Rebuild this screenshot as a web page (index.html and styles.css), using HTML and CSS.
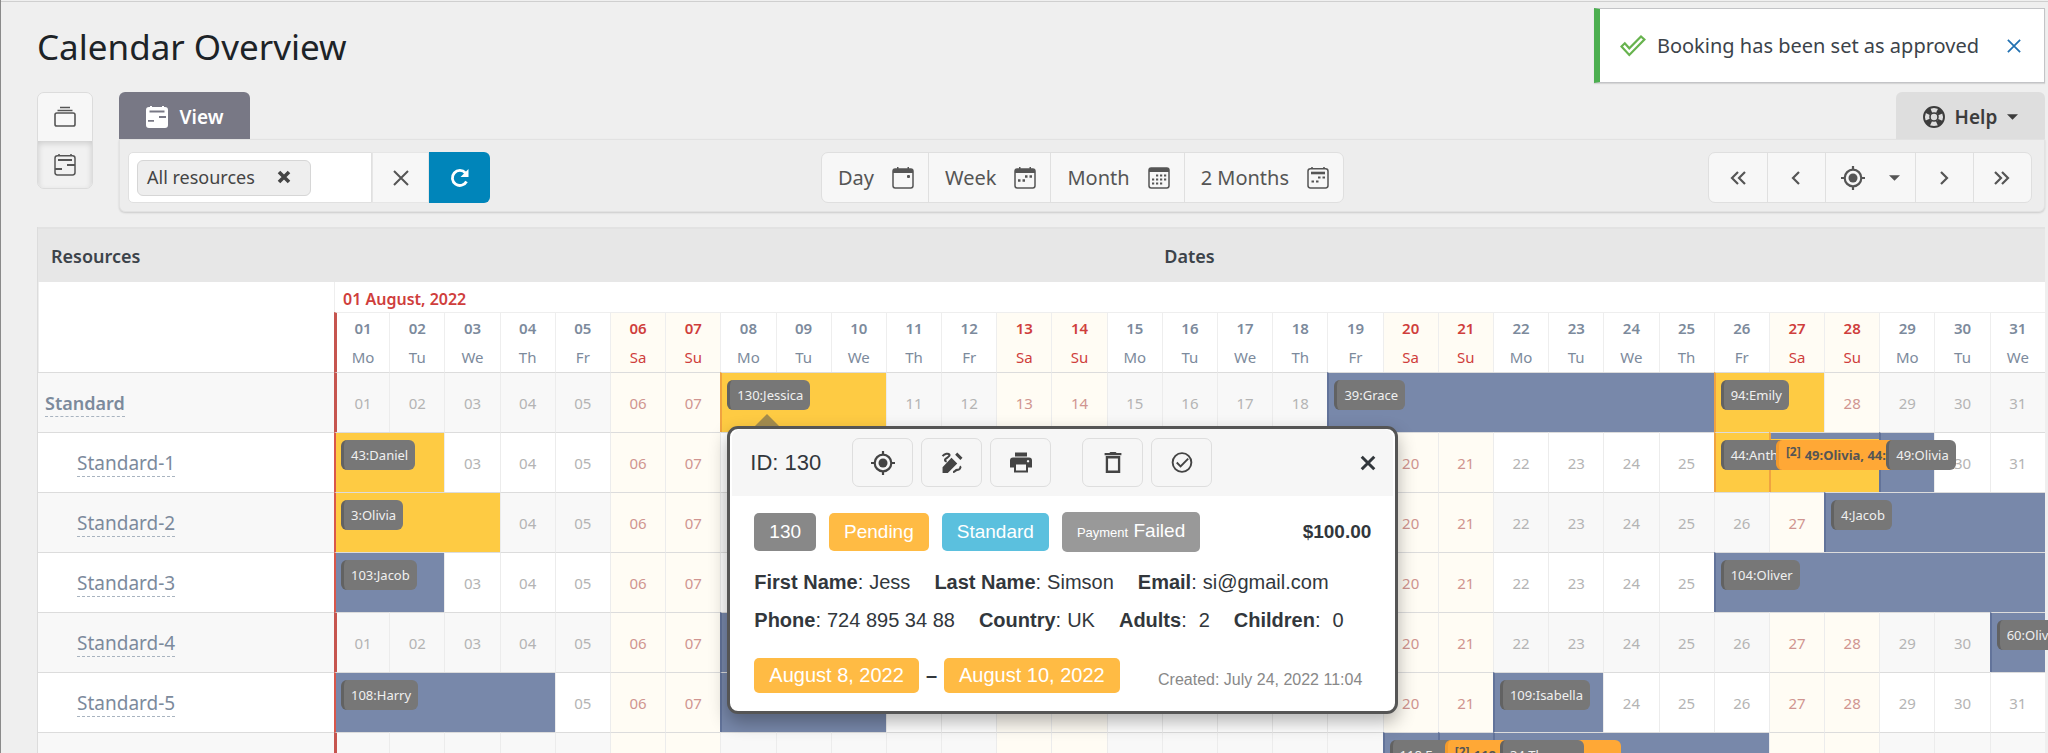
FILE: index.html
```
<!DOCTYPE html>
<html lang="en">
<head>
    <meta charset="UTF-8">
    <meta name="viewport" content="width=device-width, initial-scale=1.0">
    <title>Calendar Overview</title>
    <link rel="stylesheet" href="styles.css">
</head>
<body>
    <svg class="sprite" aria-hidden="true">
        <symbol id="i-stack" viewBox="0 0 22 22">
            <path d="M6 1.5h10M3.5 4.5h15" fill="none" stroke="currentColor" stroke-width="1.6"/>
            <rect x="1" y="7" width="20" height="13" rx="1.8" fill="none" stroke="currentColor" stroke-width="1.6"/>
        </symbol>
        <symbol id="i-timeline" viewBox="0 0 22 22">
            <path d="M5 0v2M17 0v2" stroke="currentColor" stroke-width="1.6"/>
            <rect x="1" y="1.8" width="20" height="19.2" rx="2.4" fill="none" stroke="currentColor" stroke-width="1.5"/>
            <path d="M4 6h14M13 11h8M1 15h7" stroke="currentColor" stroke-width="2.2"/>
        </symbol>
        <symbol id="i-timeline-fill" viewBox="0 0 22 22">
            <path fill="currentColor" fill-rule="evenodd" d="M3 1h1V0h2v1h10V0h2v1h1a3 3 0 0 1 3 3v15a3 3 0 0 1-3 3H3a3 3 0 0 1-3-3V4a3 3 0 0 1 3-3zM3.5 4.600v1.800h15V4.600zM13 10v2h7v-2zM2 14v1.800h6V14z"/>
        </symbol>
        <symbol id="i-day" viewBox="0 0 22 22">
            <path d="M1 6V4a2 2 0 0 1 2-2h2V0h1.5v2h9V0H17v2h2a2 2 0 0 1 2 2v2z" fill="currentColor"/>
            <rect x="1" y="2" width="20" height="19" rx="2.2" fill="none" stroke="currentColor" stroke-width="1.5"/>
            <rect x="15" y="8" width="3" height="3" rx="1" fill="currentColor"/>
        </symbol>
        <symbol id="i-week" viewBox="0 0 22 22">
            <path d="M1 6V4a2 2 0 0 1 2-2h2V0h1.5v2h9V0H17v2h2a2 2 0 0 1 2 2v2z" fill="currentColor"/>
            <rect x="1" y="2" width="20" height="19" rx="2.2" fill="none" stroke="currentColor" stroke-width="1.5"/>
            <path d="M11 9.5h2.5M15.500 9.500H18M4 13.500h2.500M8.500 13.500H11" stroke="currentColor" stroke-width="2.4"/>
        </symbol>
        <symbol id="i-month" viewBox="0 0 22 22">
            <path d="M1 5V3a2 2 0 0 1 2-2h16a2 2 0 0 1 2 2v2z" fill="currentColor"/>
            <rect x="1" y="1" width="20" height="20" rx="2.2" fill="none" stroke="currentColor" stroke-width="1.5"/>
            <path d="M8 8.500h11M4 12.500h15M4 16.500h11" stroke="currentColor" stroke-width="2.2" stroke-dasharray="2.2 1.8"/>
        </symbol>
        <symbol id="i-months" viewBox="0 0 22 22">
            <path d="M5 0v2M17 0v2" stroke="currentColor" stroke-width="1.6"/>
            <rect x="1" y="1.8" width="20" height="19.2" rx="2.4" fill="none" stroke="currentColor" stroke-width="1.5"/>
            <path d="M4 6h14" stroke="currentColor" stroke-width="2.6"/>
            <path d="M11 10.500h2.500M15.500 10.500H18M4.500 14.500H7M9 14.500h2.500" stroke="currentColor" stroke-width="2.2"/>
        </symbol>
        <symbol id="i-x" viewBox="0 0 16 16">
            <path d="M1 1l14 14M15 1L1 15" fill="none" stroke="currentColor" stroke-width="2"/>
        </symbol>
        <symbol id="i-x-bold" viewBox="0 0 14 14">
            <path d="M2 2l10 10M12 2L2 12" fill="none" stroke="currentColor" stroke-width="3.6"/>
        </symbol>
        <symbol id="i-x-medium" viewBox="0 0 14 14">
            <path d="M1.500 1.500l11 11M12.500 1.500l-11 11" fill="none" stroke="currentColor" stroke-width="2.6"/>
        </symbol>
        <symbol id="i-refresh" viewBox="0 0 20 20">
            <path d="M16.500 13.500A7.500 7.500 0 1 1 15.500 5" fill="none" stroke="currentColor" stroke-width="2.8"/>
            <path d="M18.500 1v8h-8z" fill="currentColor"/>
        </symbol>
        <symbol id="i-left" viewBox="0 0 16 16">
            <path d="M11 2L5 8l6 6" fill="none" stroke="currentColor" stroke-width="2.2"/>
        </symbol>
        <symbol id="i-right" viewBox="0 0 16 16">
            <path d="M5 2l6 6-6 6" fill="none" stroke="currentColor" stroke-width="2.2"/>
        </symbol>
        <symbol id="i-first" viewBox="0 0 16 16">
            <path d="M8 2L2 8l6 6M15 2L9 8l6 6" fill="none" stroke="currentColor" stroke-width="2.2"/>
        </symbol>
        <symbol id="i-last" viewBox="0 0 16 16">
            <path d="M1 2l6 6-6 6M8 2l6 6-6 6" fill="none" stroke="currentColor" stroke-width="2.2"/>
        </symbol>
        <symbol id="i-target" viewBox="0 0 24 24">
            <circle cx="12" cy="12" r="8.3" fill="none" stroke="currentColor" stroke-width="2.2"/>
            <circle cx="12" cy="12" r="4.5" fill="currentColor"/>
            <path d="M12 0v4M12 20v4M0 12h4M20 12h4" stroke="currentColor" stroke-width="2.2"/>
        </symbol>
        <symbol id="i-help" viewBox="0 0 22 22">
            <circle cx="11" cy="11" r="10" fill="none" stroke="currentColor" stroke-width="1.9"/>
            <circle cx="11" cy="11" r="4" fill="none" stroke="currentColor" stroke-width="1.6"/>
            <circle cx="11" cy="11" r="7.2" fill="none" stroke="currentColor" stroke-width="5" stroke-dasharray="5.2 6.110" stroke-dashoffset="-3.055"/>
        </symbol>
        <symbol id="i-caret" viewBox="0 0 12 6">
            <path d="M0 0h12L6 6z" fill="currentColor"/>
        </symbol>
        <symbol id="i-check" viewBox="0 0 26 22">
            <path d="M1.500 11.500l3.300-3.200 4.500 5L21 1.500l3.400 3L9.300 20z" fill="none" stroke="currentColor" stroke-width="2.2"/>
        </symbol>
        <symbol id="i-edit" viewBox="0 0 20 20">
            <path d="M1 14.500V20h5L15 11l-5.500-5.500zM13 2.500l2-2 5 5-2 2z" fill="currentColor"/>
            <path d="M1 4c2-2.500 5.500-3 6.500-1.500S5 5.500 4 6.500 3 9 5 9M17.500 13.500c1.500 1.500-.5 3.500-2.500 3.500s-2 2-4 2" fill="none" stroke="currentColor" stroke-width="2"/>
        </symbol>
        <symbol id="i-print" viewBox="0 0 22 20">
            <path d="M5 0h12v4H5z" fill="currentColor"/>
            <path fill="currentColor" fill-rule="evenodd" d="M3 5h16a3 3 0 0 1 3 3v7h-4v5H4v-5H0V8a3 3 0 0 1 3-3zM6 12v6h10v-6zM18 7.500a1.200 1.200 0 1 0 .1 0z"/>
        </symbol>
        <symbol id="i-trash" viewBox="0 0 16 20">
            <path d="M0 1h4.500l1-1h5l1 1H16v2.200H0z" fill="currentColor"/>
            <path d="M2.200 5h11.600v13.800H2.200z" fill="none" stroke="currentColor" stroke-width="2.2"/>
        </symbol>
        <symbol id="i-approve" viewBox="0 0 22 22">
            <circle cx="11" cy="11" r="9.8" fill="none" stroke="currentColor" stroke-width="2"/>
            <path d="M5.500 11l4 4 8-8" fill="none" stroke="currentColor" stroke-width="2"/>
        </symbol>
    </svg>

    <div class="page">
        <h1>Calendar Overview</h1>

        <div class="notice" role="status">
            <svg class="notice-icon"><use href="#i-check"/></svg>
            <span>Booking has been set as approved</span>
            <button class="notice-close" aria-label="Dismiss"><svg><use href="#i-x"/></svg></button>
        </div>

        <div class="top">
            <div class="modes">
                <button aria-label="Listing"><svg><use href="#i-stack"/></svg></button>
                <button class="active" aria-label="Timeline"><svg><use href="#i-timeline"/></svg></button>
            </div>
            <div class="panel">
                <div class="tabs">
                    <button class="tab tab-view"><svg><use href="#i-timeline-fill"/></svg>View</button>
                    <button class="tab tab-help"><svg><use href="#i-help"/></svg>Help<svg class="caret"><use href="#i-caret"/></svg></button>
                </div>
                <div class="toolbar">
                    <div class="filter">
                        <div class="chosen">
                            <span class="chip">All resources<button aria-label="Remove All resources"><svg><use href="#i-x-bold"/></svg></button></span>
                            <input type="text" aria-label="Resources">
                        </div>
                        <button class="filter-clear" aria-label="Clear"><svg><use href="#i-x"/></svg></button>
                        <button class="filter-apply" aria-label="Refresh"><svg><use href="#i-refresh"/></svg></button>
                    </div>
                    <div class="group scale">
                        <button>Day<svg><use href="#i-day"/></svg></button>
                        <button>Week<svg><use href="#i-week"/></svg></button>
                        <button>Month<svg><use href="#i-month"/></svg></button>
                        <button>2 Months<svg><use href="#i-months"/></svg></button>
                    </div>
                    <div class="group steps">
                        <button aria-label="First"><svg><use href="#i-first"/></svg></button>
                        <button aria-label="Previous"><svg><use href="#i-left"/></svg></button>
                        <button class="wide" aria-label="Today"><svg class="target"><use href="#i-target"/></svg><svg class="caret"><use href="#i-caret"/></svg></button>
                        <button aria-label="Next"><svg><use href="#i-right"/></svg></button>
                        <button aria-label="Last"><svg><use href="#i-last"/></svg></button>
                    </div>
                </div>
            </div>
        </div>

        <table class="timeline">
            <thead>
                <tr class="titles">
                    <th class="names">Resources</th>
                    <th colspan="31">Dates</th>
                </tr>
                <tr class="month">
                    <td rowspan="2"></td>
                    <th colspan="31">01 August, 2022</th>
                </tr>
                <tr class="days" id="days"></tr>
            </thead>
            <tbody id="rows"></tbody>
        </table>
    </div>

    <div class="popover" id="popover">
        <div class="popover-head">
            <span class="popover-id">ID: 130</span>
            <div class="actions">
                <button aria-label="Locate"><svg class="target"><use href="#i-target"/></svg></button>
                <button aria-label="Edit"><svg><use href="#i-edit"/></svg></button>
                <button aria-label="Print"><svg><use href="#i-print"/></svg></button>
            </div>
            <div class="actions">
                <button aria-label="Delete"><svg><use href="#i-trash"/></svg></button>
                <button aria-label="Approve"><svg><use href="#i-approve"/></svg></button>
            </div>
            <button class="popover-close" aria-label="Close"><svg><use href="#i-x-medium"/></svg></button>
        </div>
        <div class="popover-body">
            <div class="badges">
                <span class="badge gray">130</span>
                <span class="badge orange">Pending</span>
                <span class="badge blue">Standard</span>
                <span class="badge silver"><small>Payment</small> Failed</span>
                <strong class="cost">$100.00</strong>
            </div>
            <div class="fields">
                <span><b>First Name</b>:<i>Jess</i></span>
                <span><b>Last Name</b>:<i>Simson</i></span>
                <span><b>Email</b>:<i>si@gmail.com</i></span>
            </div>
            <div class="fields">
                <span><b>Phone</b>:<i>724 895 34 88</i></span>
                <span><b>Country</b>:<i>UK</i></span>
                <span><b>Adults</b>:<i class="count">2</i></span>
                <span><b>Children</b>:<i class="count">0</i></span>
            </div>
            <div class="period">
                <span class="badge orange">August 8, 2022</span>
                <b>–</b>
                <span class="badge orange">August 10, 2022</span>
                <span class="created">Created: July 24, 2022 11:04</span>
            </div>
        </div>
    </div>

    <script src="script.js"></script>
</body>
</html>
```
FILE: styles.css
```
* {
    box-sizing: border-box;
}
body {
    margin: 0;
    height: 100vh;
    overflow: hidden;
    background-color: #efefef;
    color: #3c434a;
    font-family: "Noto Sans", "Open Sans", sans-serif;
    font-size: 19px;
}
button, input {
    font: inherit;
    color: inherit;
    border: none;
    background: none;
    padding: 0;
    margin: 0;
}
button {
    cursor: pointer;
    display: flex;
    align-items: center;
    justify-content: center;
}
svg {
    width: 22px;
    height: 22px;
    flex: none;
}
.sprite {
    position: absolute;
    width: 0;
    height: 0;
}
.page {
    position: relative;
    height: 100%;
    overflow: hidden;
    border-left: 1px solid #8a8a8a;
    padding: 0 3px 0 36px;
}
.page::before {
    content: "";
    position: absolute;
    top: 1px;
    left: 0;
    right: 0;
    height: 1px;
    background-color: #cfcfcf;
}
h1 {
    margin: 0;
    height: 92px;
    line-height: 94px;
    color: #1d2327;
    font-size: 35px;
    font-weight: 400;
}

/* notice */
.notice {
    position: absolute;
    top: 8px;
    right: 3px;
    display: flex;
    align-items: center;
    height: 75px;
    padding: 0 23px 0 20px;
    border: 1px solid #c3c4c7;
    border-left: 6px solid #4caf50;
    background-color: #fff;
    font-size: 20px;
    box-shadow: 0 1px 1px rgba(0,0,0,0.1);
}
.notice-icon {
    width: 26px;
    color: #67b34e;
    margin-right: 11px;
}
.notice-close {
    margin-left: 28px;
    color: #2271b1;
}
.notice-close svg {
    width: 14px;
    height: 14px;
}

/* top bar */
.top {
    display: flex;
    gap: 26px;
    margin-bottom: 15px;
}
.modes {
    width: 56px;
    height: 97px;
    border: 1px solid #dcdcdc;
    border-radius: 7px;
    overflow: hidden;
    color: #555;
}
.modes button {
    width: 100%;
    height: 48px;
    background-color: #f7f7f7;
}
.modes .active {
    background-color: #f1f1f1;
    box-shadow: inset 0 2px 6px rgba(0,0,0,0.16);
}
.panel {
    flex: 1;
}
.tabs {
    display: flex;
    justify-content: space-between;
    height: 47px;
}
.tab {
    gap: 12px;
    padding-top: 3px;
    border-radius: 6px 6px 0 0;
    font-weight: 600;
}
.tab-view {
    width: 131px;
    background-color: #787885;
    color: #fff;
}
.tab-help {
    width: 149px;
    gap: 10px;
    background-color: #dedede;
    color: #3c3c3c;
}
.caret {
    width: 11px;
    height: 6px;
}
.toolbar {
    display: flex;
    justify-content: space-between;
    align-items: center;
    height: 73px;
    padding: 4px 12px 0 8px;
    border: 1px solid #e2e2e2;
    border-radius: 0 0 6px 6px;
    background-color: #ededed;
    box-shadow: 0 1px 2px rgba(0,0,0,0.15);
}
.filter, .group {
    display: flex;
    height: 51px;
    color: #555;
}
.chosen {
    display: flex;
    align-items: center;
    width: 244px;
    padding: 0 8px;
    border: 1px solid #e0e0e0;
    border-radius: 5px 0 0 5px;
    background-color: #fff;
}
.chosen input {
    flex: 1;
    min-width: 0;
}
.chip {
    display: flex;
    align-items: center;
    justify-content: space-between;
    width: 174px;
    height: 36px;
    padding: 0 19px 2px 9px;
    border: 1px solid #d6d6d6;
    border-radius: 6px;
    background-color: #eee;
    color: #444;
    font-size: 18px;
}
.chip svg {
    width: 14px;
    height: 14px;
}
.filter-clear {
    width: 57px;
    border: 1px solid #e6e6e6;
    background-color: #f7f7f7;
}
.filter-clear svg {
    width: 16px;
    height: 16px;
}
.filter-apply {
    width: 61px;
    border-radius: 0 6px 6px 0;
    background-color: #0085ba;
    color: #fff;
}
.filter-apply svg {
    width: 20px;
    height: 20px;
}
.group {
    border: 1px solid #dfdfdf;
    border-radius: 7px;
    background-color: #f7f7f7;
}
.group button + button {
    border-left: 1px solid #e0e0e0;
}
.scale {
    margin-right: 33px;
    font-size: 20px;
}
.scale button {
    gap: 18px;
    padding: 0 14px 0 16px;
}
.steps button {
    width: 58px;
}
.steps .wide {
    width: 90px;
    gap: 24px;
}
.steps svg {
    width: 16px;
    height: 16px;
}
.steps .target, .actions .target {
    width: 24px;
    height: 24px;
}
.steps .caret {
    width: 11px;
    height: 6px;
}

/* timeline */
.timeline {
    width: 100%;
    table-layout: fixed;
    border-spacing: 0;
    border-left: 1px solid #dcdcdc;
    background-color: #fff;
    font-size: 15px;
    color: #7c8a9c;
}
.timeline th, .timeline td {
    padding: 0;
    text-align: center;
}
.titles th {
    height: 55px;
    border-top: 2px solid #e2e2e2;
    background-color: #e7e7e7;
    color: #3c434a;
    font-size: 18px;
    font-weight: 600;
}
.timeline .names {
    width: 296px;
    padding-left: 13px;
    text-align: left;
}
.timeline .month th {
    height: 30px;
    padding: 3px 0 0 8px;
    text-align: left;
    font-size: 16px;
    line-height: 24px;
    font-weight: 600;
    color: #cf3e3c;
}
.month th, .month td {
    border-left: 1px solid #eee;
}
.days th {
    height: 60px;
    border-top: 1px solid #eee;
    border-left: 1px solid #eee;
    font-weight: 400;
    line-height: 29px;
}
.days b {
    display: block;
    font-weight: 600;
}
.days .weekend {
    background-color: #fffcf4;
    color: #cf3e3c;
}
.timeline .first {
    border-left: 3px solid #c6554f;
}
.row td, .row th {
    position: relative;
    height: 60px;
    border-top: 1px solid #dcdcdc;
    border-left: 1px solid #ececec;
    color: #b4b4b4;
}
.row .name {
    border-left: none;
    padding: 2px 0 0 39px;
    text-align: left;
    font-weight: 400;
    font-size: 19px;
}
.row .name a {
    display: inline-block;
    line-height: 25px;
    border-bottom: 1px dashed #a9b4c0;
    color: #7c8a9c;
    text-decoration: none;
}
.row.parent .name {
    padding-left: 7px;
    font-size: 18px;
    font-weight: 600;
}
.row:nth-child(odd) td, .row:nth-child(odd) th {
    background-color: #f8f8f8;
}
.row td.weekend, .row:nth-child(odd) td.weekend {
    background-color: #fffcf4;
    color: #d09590;
}
.row td.approved, .row:nth-child(odd) td.approved {
    background-color: #7888aa;
    border-left: 2px solid #62739a;
}
.row td.pending, .row:nth-child(odd) td.pending {
    background-color: #fecb43;
    border-left: 2px solid #f0a340;
}
.row td.mixed {
    background: linear-gradient(#7888aa 6px, #fecb43 6px);
    border-left: 2px solid #f0a340;
}
.row td.first.pending, .row td.first.approved, .row:nth-child(odd) td.first.pending {
    border-left: 2px solid #d9574a;
}
.label {
    position: absolute;
    z-index: 1;
    top: 7px;
    left: 5px;
    height: 30px;
    padding: 0 7px;
    border-left: 3px solid #626262;
    border-radius: 6px;
    background-color: #777;
    color: #f0f0f0;
    font-size: 13px;
    line-height: 31px;
    text-align: left;
    white-space: nowrap;
}
.label.several {
    width: 176px;
    border-left-color: #f39a2c;
    background-color: #ffa836;
    color: #555;
    font-weight: 700;
    overflow: hidden;
}
.label sup {
    margin-right: 4px;
    font-size: 12px;
    line-height: 0;
    vertical-align: 4px;
}

/* booking details */
.popover {
    position: absolute;
    z-index: 2;
    top: 53px;
    left: 5px;
    width: 671px;
    border: 3px solid #555;
    border-radius: 11px;
    background-color: #fff;
    color: #32373c;
    font-family: "Liberation Sans", Arial, sans-serif;
    font-size: 20px;
    text-align: left;
    box-shadow: 0 8px 18px rgba(0,0,0,0.3);
}
.popover::before {
    content: "";
    position: absolute;
    top: -15px;
    left: 25px;
    border: 12px solid transparent;
    border-top: none;
    border-bottom-color: rgba(85,85,85,0.55);
}
.popover-head {
    display: flex;
    align-items: center;
    gap: 31px;
    height: 67px;
    margin: 0 2px;
    padding: 0 17px 0 18px;
    border-radius: 9px 9px 0 0;
    background-color: #f6f6f6;
}
.popover-id {
    font-size: 22px;
}
.actions {
    display: flex;
    gap: 8px;
}
.actions button {
    width: 61px;
    height: 49px;
    border: 1px solid #dedede;
    border-radius: 7px;
    color: #444;
}
.actions svg {
    height: 21px;
}
.popover-close {
    margin-left: auto;
}
.popover-close svg {
    width: 16px;
    height: 16px;
}
.popover-body {
    padding: 16px 24px 18px;
}
.badges, .period, .fields {
    display: flex;
    align-items: center;
}
.badges {
    gap: 13px;
    margin-bottom: 11px;
    font-size: 19px;
}
.badge {
    padding: 0 15px;
    border-radius: 5px;
    color: #fff;
    line-height: 38px;
}
.badge small {
    font-size: 13px;
}
.gray {
    background-color: #888;
}
.silver {
    background-color: #999;
}
.orange {
    background-color: #ffbb44;
}
.blue {
    background-color: #5bc0de;
}
.cost {
    margin-left: auto;
}
.fields {
    gap: 24px;
    line-height: 38px;
}
.fields i {
    font-style: normal;
    margin-left: 6px;
}
.fields .count {
    margin-left: 12px;
}
.period {
    gap: 7px;
    margin-top: 19px;
}
.period .badge {
    line-height: 35px;
    padding: 0 15px;
}
.created {
    align-self: flex-end;
    margin: 0 9px 4px auto;
    color: #888;
    font-size: 16px;
}
```
FILE: script.js
```
const weekdays = ['Su', 'Mo', 'Tu', 'We', 'Th', 'Fr', 'Sa'];
const lastDay = 31;

const rows = [
    { name: 'Standard', parent: true, bookings: [
        { from: 8, to: 10, type: 'pending', labels: ['130:Jessica'], open: true },
        { from: 19, to: 25, type: 'approved', labels: ['39:Grace'] },
        { from: 26, to: 27, type: 'pending', labels: ['94:Emily'] }
    ] },
    { name: 'Standard-1', bookings: [
        { from: 1, to: 2, type: 'pending', labels: ['43:Daniel'] },
        { from: 26, to: 26, type: 'pending', labels: ['44:Anthony'] },
        { from: 27, to: 28, type: 'mixed', count: 2, labels: ['49:Olivia, 44:Anthony'] },
        { from: 29, to: 29, type: 'approved', labels: ['49:Olivia'] }
    ] },
    { name: 'Standard-2', bookings: [
        { from: 1, to: 3, type: 'pending', labels: ['3:Olivia'] },
        { from: 28, to: 31, type: 'approved', labels: ['4:Jacob'] }
    ] },
    { name: 'Standard-3', bookings: [
        { from: 1, to: 2, type: 'approved', labels: ['103:Jacob'] },
        { from: 26, to: 31, type: 'approved', labels: ['104:Oliver'] }
    ] },
    { name: 'Standard-4', bookings: [
        { from: 8, to: 10, type: 'approved', labels: [] },
        { from: 31, to: 31, type: 'approved', labels: ['60:Oliver'] }
    ] },
    { name: 'Standard-5', bookings: [
        { from: 1, to: 4, type: 'approved', labels: ['108:Harry'] },
        { from: 8, to: 10, type: 'approved', labels: [] },
        { from: 22, to: 23, type: 'approved', labels: ['109:Isabella'] }
    ] },
    { name: 'Standard-6', bookings: [
        { from: 20, to: 20, type: 'approved', labels: ['118:Emma'] },
        { from: 21, to: 21, type: 'approved', count: 2, labels: ['118:Emma'] },
        { from: 22, to: 26, type: 'approved', labels: ['34:Thomas'] }
    ] }
];

function pad(day) {
    return String(day).padStart(2, '0');
}

function dayClass(day) {
    const weekday = new Date(2022, 7, day).getDay();
    return (weekday % 6 === 0 ? 'weekend ' : '') + (day === 1 ? 'first' : '');
}

// Header with the day numbers
for (let day = 1; day <= lastDay; day++) {
    const th = document.createElement('th');
    const weekday = new Date(2022, 7, day).getDay();
    th.className = dayClass(day);
    th.innerHTML = '<b>' + pad(day) + '</b>' + weekdays[weekday];
    document.getElementById('days').appendChild(th);
}

// One row per resource, a booking spans its days
rows.forEach(row => {
    const tr = document.createElement('tr');
    tr.className = row.parent ? 'row parent' : 'row';
    tr.innerHTML = '<th class="name"><a href="#">' + row.name + '</a></th>';

    for (let day = 1; day <= lastDay; day++) {
        const td = document.createElement('td');
        const booking = row.bookings.find(b => b.from === day);

        if (booking) {
            td.colSpan = booking.to - booking.from + 1;
            td.className = booking.type + (day === 1 ? ' first' : '');
            booking.labels.forEach(text => {
                const label = document.createElement('span');
                label.className = booking.count ? 'label several' : 'label';
                label.innerHTML = (booking.count ? '<sup>[' + booking.count + ']</sup>' : '') + text;
                td.appendChild(label);
            });
            if (booking.open) {
                td.appendChild(document.getElementById('popover'));
            }
            day = booking.to;
        } else {
            td.className = dayClass(day);
            td.textContent = pad(day);
        }
        tr.appendChild(td);
    }
    document.getElementById('rows').appendChild(tr);
});
```
